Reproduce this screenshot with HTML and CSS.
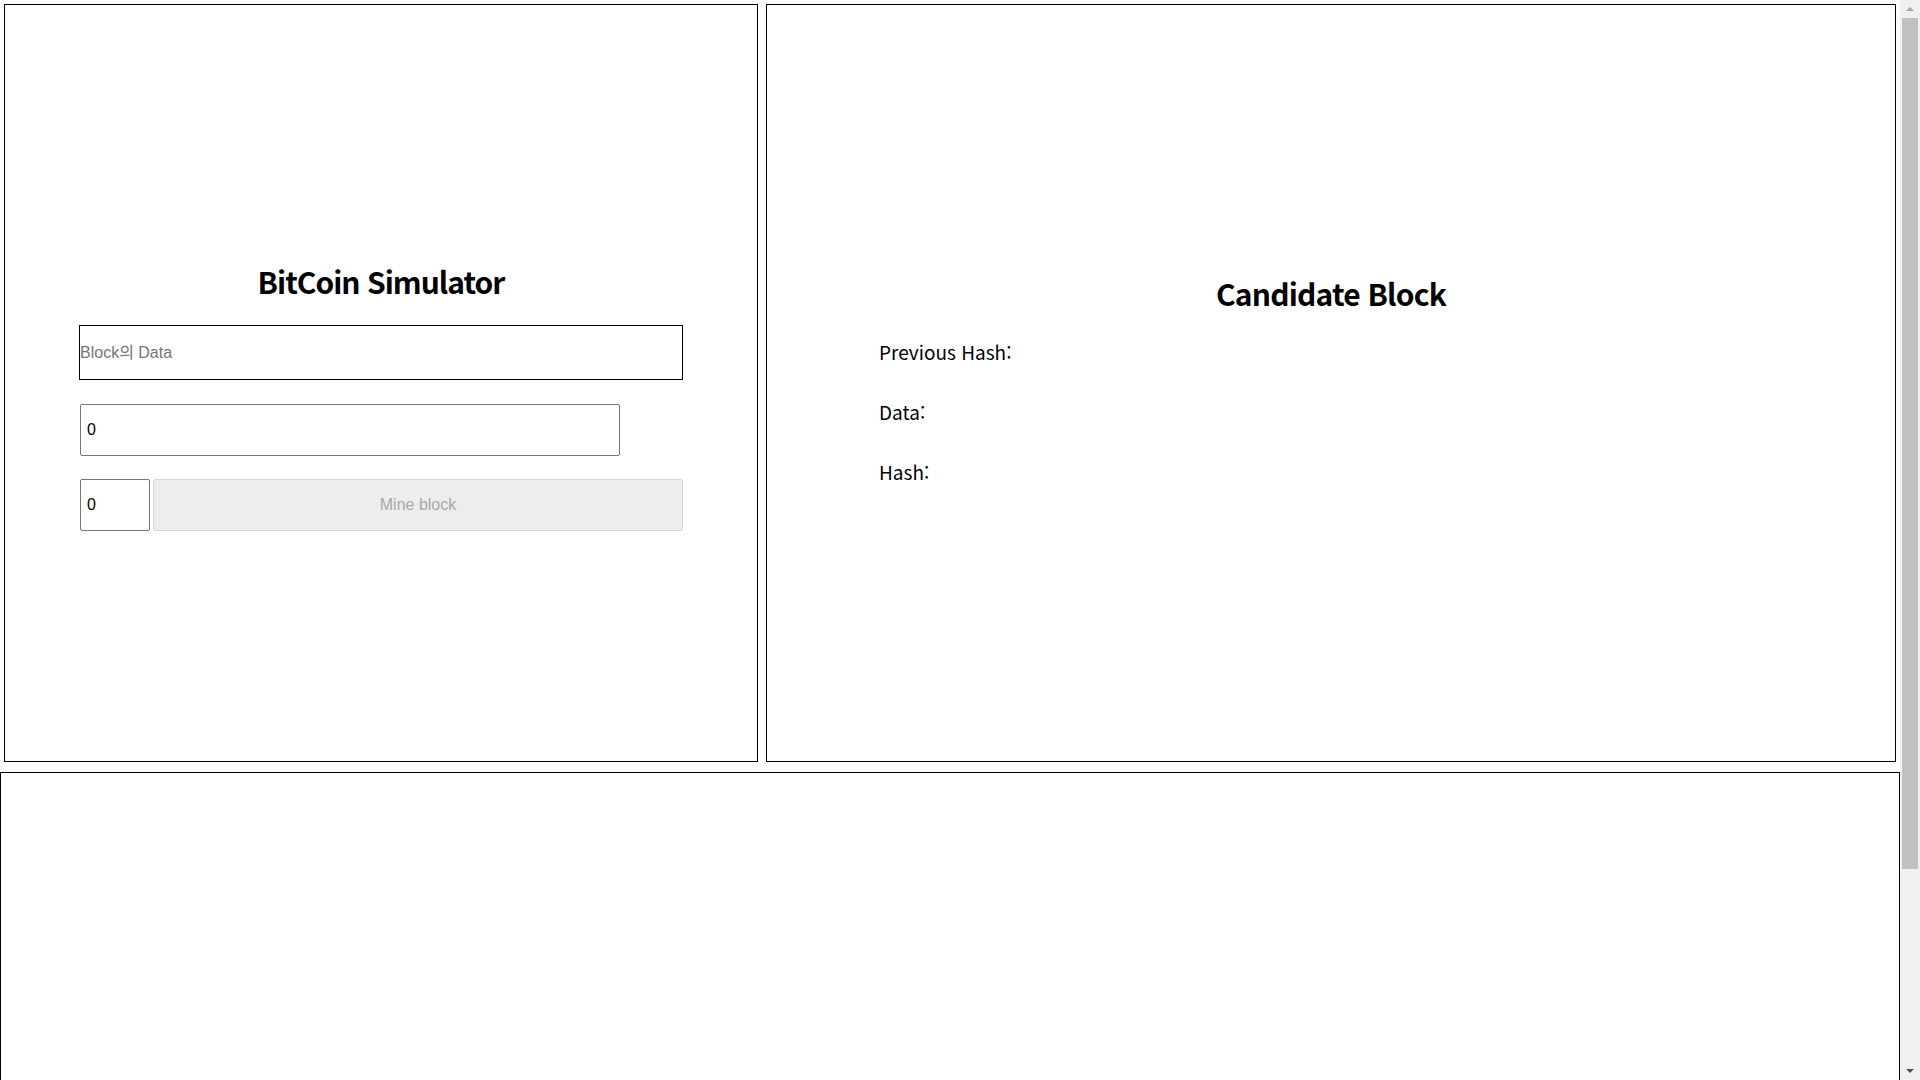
FILE: index.html
```html
<!DOCTYPE html>
<html lang="ko">
<head>
<meta charset="utf-8">
<title>BitCoin Simulator</title>
<link rel="stylesheet" href="styles.css">
</head>
<body>
<div class="top">
  <section class="panel panel-sim">
    <h1 class="title">BitCoin Simulator</h1>
    <div class="form">
      <input class="data-input" type="text" placeholder="Block의 Data">
      <input class="num-input" type="text" value="0">
      <div class="mine-row">
        <input class="nonce-input" type="text" value="0">
        <button class="mine-btn" disabled>Mine block</button>
      </div>
    </div>
  </section>
  <section class="panel panel-cand">
    <h1 class="title title-cand">Candidate Block</h1>
    <div class="fields">
      <p class="field">Previous Hash:</p>
      <p class="field">Data:</p>
      <p class="field">Hash:</p>
    </div>
  </section>
</div>
<section class="chain"></section>
<div class="scrollbar" aria-hidden="true">
  <div class="sb-btn"><span class="sb-arrow sb-up"></span></div>
  <div class="sb-thumb"></div>
  <div class="sb-track"></div>
  <div class="sb-btn"><span class="sb-arrow sb-down"></span></div>
</div>
</body>
</html>
```
FILE: styles.css
```css
html {
  background: #fff;
}
body {
  margin: 0;
  font-family: "Noto Sans CJK KR", "Noto Sans", sans-serif;
  color: #000;
}
.top {
  display: flex;
  gap: 8px;
  padding: 4px 4px 0 4px;
}
.panel {
  box-sizing: border-box;
  height: 758px;
  border: 1px solid #000;
  display: flex;
  flex-direction: column;
  justify-content: center;
}
.panel-sim {
  width: 754px;
  flex: 0 0 754px;
  align-items: center;
}
.panel-cand {
  width: 1130px;
  flex: 0 0 1130px;
  align-items: stretch;
}
.title {
  margin: 0;
  font-size: 30px;
  line-height: 40px;
  font-weight: 700;
  letter-spacing: -1px;
  text-align: center;
}
.panel-sim .title {
  margin-top: 26px;
}
.form {
  width: 604px;
  margin-top: 24px;
  display: flex;
  flex-direction: column;
  align-items: flex-start;
}
input {
  font-family: "Liberation Sans", "Noto Sans CJK KR", sans-serif;
  font-size: 16px;
  color: #000;
  box-sizing: border-box;
  outline: none;
}
.data-input {
  width: 604px;
  height: 55px;
  border: 1px solid #000;
  border-radius: 0;
  padding: 0;
}
.data-input::placeholder {
  color: #757575;
}
.num-input {
  width: 540px;
  height: 52px;
  margin-top: 24px;
  margin-left: 1px;
  border: 1px solid #767676;
  border-radius: 2px;
  padding: 0 6px;
}
.mine-row {
  display: flex;
  gap: 3px;
  margin-top: 23px;
  margin-left: 1px;
  width: 603px;
}
.nonce-input {
  width: 70px;
  height: 52px;
  border: 1px solid #767676;
  border-radius: 2px;
  padding: 0 6px;
}
.mine-btn {
  flex: 1;
  height: 52px;
  background: #ededed;
  border: 1px solid #d6d6d6;
  border-radius: 2px;
  color: #a9a9a9;
  font-family: "Liberation Sans", sans-serif;
  font-size: 16px;
  padding: 0;
}
.title-cand {
  margin-top: 0;
  letter-spacing: -0.8px;
}
.fields {
  padding-left: 112px;
  margin-top: 27px;
  margin-bottom: 9px;
}
.field {
  margin: 0 0 36px 0;
  font-size: 19px;
  line-height: 24px;
}
.field:last-child {
  margin-bottom: 0;
}
.chain {
  box-sizing: border-box;
  width: calc(100% - 20px);
  height: 548px;
  margin-top: 10px;
  border: 1px solid #000;
}
.scrollbar {
  position: fixed;
  top: 0;
  right: 0;
  width: 20px;
  height: 100vh;
  background: #f0f0f0;
  display: flex;
  flex-direction: column;
}
.sb-btn {
  height: 18px;
  display: flex;
  align-items: center;
  justify-content: center;
}
.sb-arrow {
  width: 0;
  height: 0;
  border-left: 4px solid transparent;
  border-right: 4px solid transparent;
}
.sb-up {
  border-bottom: 4px solid #a3a3a3;
}
.sb-down {
  border-top: 4px solid #505050;
}
.sb-thumb {
  height: 851px;
  margin: 0 2px 0 2px;
  background: #c1c1c1;
}
.sb-track {
  flex: 1;
}
```
